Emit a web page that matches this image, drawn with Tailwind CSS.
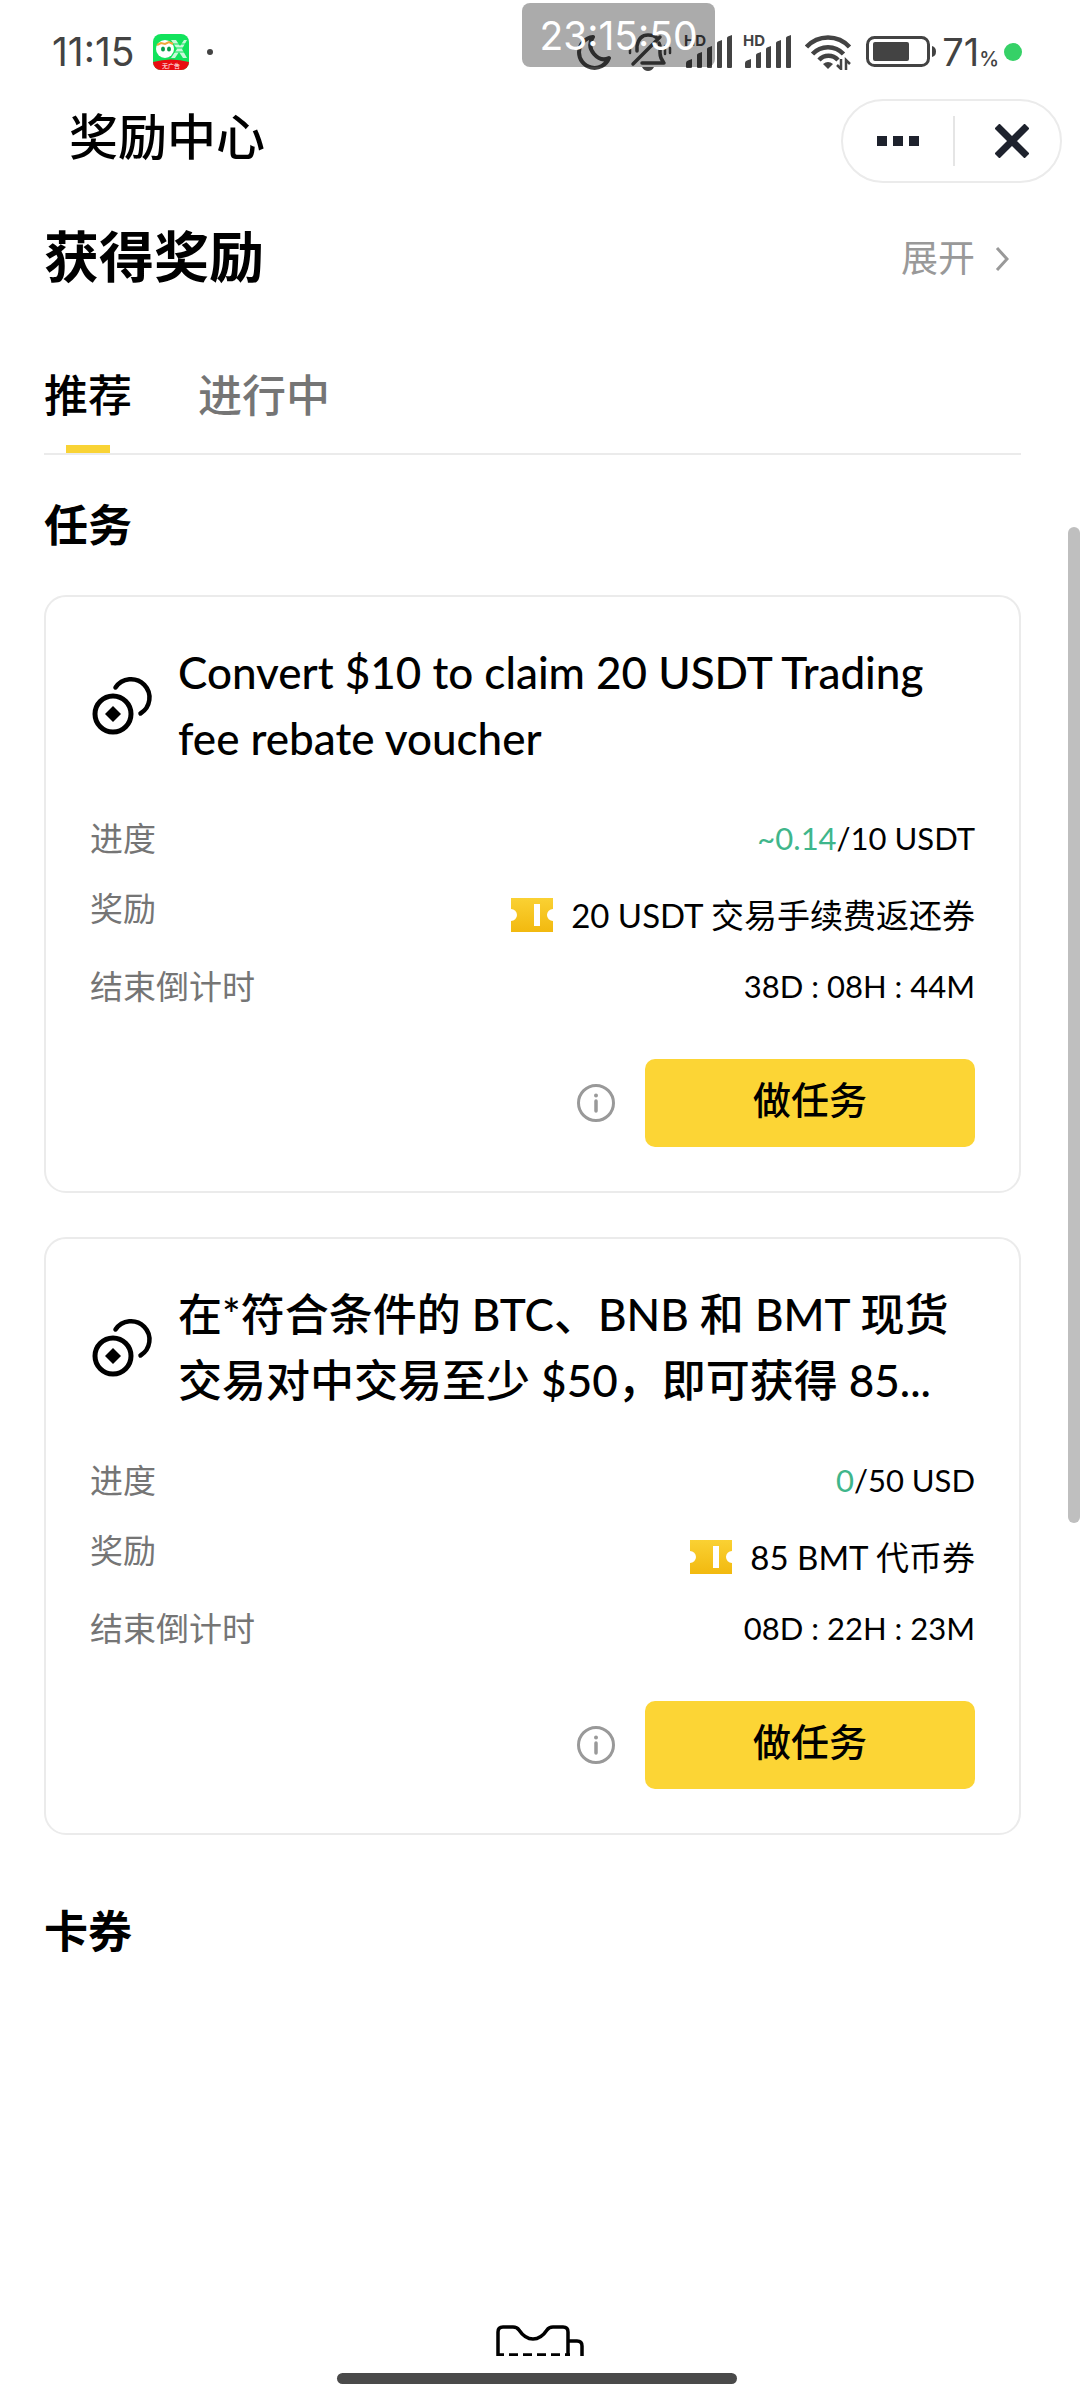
<!DOCTYPE html>
<html lang="zh-CN">
<head>
<meta charset="utf-8">
<meta name="viewport" content="width=device-width, initial-scale=1">
<title>奖励中心</title>
<script src="https://cdn.jsdelivr.net/npm/@tailwindcss/browser@4"></script>
</head>
<body class="bg-white text-black">
<svg class="absolute size-0" aria-hidden="true">
  <defs>
    <linearGradient id="gold" x1="0" y1="0" x2="0" y2="1"><stop offset="0" stop-color="#fad133"/><stop offset="1" stop-color="#f2b90f"/></linearGradient>
    <symbol id="coins" viewBox="0 0 64 60">
      <circle cx="23" cy="39" r="18" fill="none" stroke="currentColor" stroke-width="5"/>
      <path d="M23 31l8 8-8 8-8-8z" fill="currentColor"/>
      <path d="M25.500 12.500A18.500 18.500 0 1 1 50.500 38.500" fill="none" stroke="currentColor" stroke-width="4.500" stroke-linecap="round"/>
    </symbol>
    <symbol id="ticket" viewBox="0 0 42 34">
      <path d="M0 0h42v11a6 6 0 0 0 0 12v11H0V23a6 6 0 0 0 0-12z" fill="url(#gold)"/>
      <path d="M23 6h6v22h-6z" fill="#fff"/>
    </symbol>
    <symbol id="info" viewBox="0 0 38 38">
      <circle cx="19" cy="19" r="17.500" fill="none" stroke="currentColor" stroke-width="3"/>
      <path d="M19 17v10" stroke="currentColor" stroke-width="3.500" stroke-linecap="round"/>
      <circle cx="19" cy="11.500" r="2" fill="currentColor"/>
    </symbol>
    <symbol id="signal" viewBox="0 0 50 36">
      <text x="0" y="12" font-size="15" font-weight="700" font-family="Inter, sans-serif" fill="currentColor">HD</text>
      <path d="M2 33v-4q0-2 2-2.500l4-1.500v8q0 1-1 1H3q-1 0-1-1zM13 33V21q0-1 1-1.500l4-1.500v15q0 1-1 1h-3q-1 0-1-1zM23 33V15q0-1 1-1.500l4-1.500v21q0 1-1 1h-3q-1 0-1-1zM33 33V9q0-1 1-1.500L38 6v27q0 1-1 1h-3q-1 0-1-1zM43 33V4q0-1 1-1.500L48 1v32q0 1-1 1h-3q-1 0-1-1z" fill="currentColor"/>
    </symbol>
  </defs>
</svg>

<div class="relative flex min-h-screen flex-col font-['Lato','Noto_Sans_CJK_SC',sans-serif]">

  <!-- system status bar -->
  <div class="flex h-[99px] items-center justify-between pr-[58px] pl-[52px] pt-1 font-['Inter',sans-serif] text-[#434343]">
    <div class="flex items-center">
      <span class="text-[39px] leading-none">11:15</span>
      <svg class="ml-[18px] size-9" viewBox="0 0 36 36">
        <rect width="36" height="36" rx="8" fill="#12e35c"/>
        <path d="M18 6h5l4 6 4-6h3l-5 9 5 9h-4l-4-6-4 6h-4l6-9z" fill="#c9f8da"/>
        <path d="M18 10h17M18 14h17M18 18h17" stroke="#12e35c"/>
        <circle cx="12" cy="15" r="9" fill="#fff"/>
        <path d="M4 11l4-2 4 1 4-2 4 2" fill="none" stroke="#f0a73a" stroke-width="2"/>
        <ellipse cx="10" cy="15" rx="2" ry="2.500" fill="#0a9e4a"/><ellipse cx="16" cy="15" rx="2" ry="2.500" fill="#0a9e4a"/>
        <path d="M0 28q18-5 36 0a8 8 0 0 1-8 8H8a8 8 0 0 1-8-8z" fill="#e90c10"/>
        <text x="18" y="34" text-anchor="middle" font-size="6" font-family="Noto Sans CJK SC, sans-serif" fill="#fff">无广告</text>
      </svg>
      <span class="ml-[18px] size-[6px] rounded-full bg-[#434343]"></span>
    </div>
    <div class="flex items-center">
      <svg class="mr-4 h-9 w-[35px]" viewBox="0 0 35 36" fill="none" stroke="currentColor" stroke-width="4" stroke-linejoin="round"><path d="M16 3A15.500 15.500 0 1 0 32 24Q24 28 17 20Q10 12 16 3z"/></svg>
      <svg class="mr-3 h-[38px] w-11" viewBox="0 0 44 38" fill="none" stroke="currentColor" stroke-width="3.500" stroke-linecap="round" stroke-linejoin="round"><path d="M14 30h22q-4-5-4-10v-6q0-2-1-4M9 18v-5Q11 2 20 2q6 0 9 3M5 31L32 4"/><path d="M2 15v5M42 15v5M37 13v8" stroke-width="2.500"/><path d="M14 34h12q-2 4-6 4t-6-4z" fill="currentColor" stroke="none"/></svg>
      <svg class="mr-[9px] h-9 w-[50px]"><use href="#signal"/></svg>
      <svg class="mr-3 h-9 w-[50px]"><use href="#signal"/></svg>
      <svg class="mr-[14px] h-9 w-[47px]" viewBox="0 0 47 36" fill="none" stroke="currentColor" stroke-width="4.500"><path d="M1.500 13a29 29 0 0 1 43 0M7.500 20a21 21 0 0 1 31 0M14 26a13 13 0 0 1 19 0"/><path d="M18 30q5-4 10 0l-5 5z" fill="currentColor" stroke="none"/><path d="M36 25v10l-4-4M41 36V26l4 4" stroke-width="2.500"/></svg>
      <svg class="mr-[6px] h-[31px] w-[70px]" viewBox="0 0 70 31"><rect x="1.500" y="1.500" width="61" height="28" rx="7" fill="none" stroke="currentColor" stroke-width="3"/><rect x="7" y="6" width="36" height="19" rx="2" fill="currentColor"/><path d="M66 10q4 1 4 5.500T66 21z" fill="currentColor"/></svg>
      <span class="text-[38px] leading-none">71<span class="text-[20px] leading-none font-medium">%</span></span>
      <span class="ml-[5px] size-[18px] rounded-full bg-[#36d167]"></span>
    </div>
  </div>
  <!-- floating clock over the status bar -->
  <div class="absolute top-[3px] right-[365px] flex h-16 w-[193px] items-center justify-center rounded-lg bg-black/33 font-['Inter',sans-serif] text-[39px] leading-none text-white">23:15:50</div>

  <header class="flex h-[84px] items-center justify-between pr-[18px] pl-[69px]">
    <h1 class="pb-[10px] text-[49px] leading-[72px] font-medium">奖励中心</h1>
    <div class="flex h-[84px] w-[221px] items-center rounded-full border-2 border-[#ebebeb] text-[#1e222d]">
      <button class="flex w-[110px] justify-center" aria-label="更多"><svg class="h-[10px] w-[42px]" viewBox="0 0 42 10" fill="currentColor"><path d="M0 0h10v10H0zM16 0h10v10H16zM32 0h10v10H32z"/></svg></button>
      <span class="h-[50px] w-[2px] bg-[#e5e5e5]"></span>
      <button class="flex flex-1 justify-center pl-2" aria-label="关闭"><svg class="size-[34px]" viewBox="0 0 34 34" fill="none" stroke="currentColor" stroke-width="7"><path d="M2 2l30 30M32 2L2 32"/></svg></button>
    </div>
  </header>

  <main class="flex flex-1 flex-col">
    <div class="pr-[59px] pl-[44px]">
      <div class="flex h-[147px] items-center justify-between">
        <h2 class="pb-[2px] text-[55px] leading-[80px] font-bold">获得奖励</h2>
        <a href="#rewards" class="mt-[2px] mr-3 flex items-center gap-5 text-[37px] leading-[56px] text-[#999]">展开
          <svg class="mt-[2px] h-6 w-[14px]" viewBox="0 0 14 24" fill="none" stroke="currentColor" stroke-width="3"><path d="M2 1l10 11L2 23"/></svg>
        </a>
      </div>

      <nav class="flex h-[125px] gap-[66px] border-b-2 border-[#ebebeb] text-[44px] leading-[64px] font-medium">
        <button class="relative flex items-center justify-center pt-[6px]">推荐<span class="absolute bottom-0 h-2 w-11 bg-[#f9d335]"></span></button>
        <button class="flex items-center pt-[6px] text-[#757575]">进行中</button>
      </nav>

      <h3 class="flex h-[140px] items-center text-[44px] leading-[64px] font-bold">任务</h3>

      <article class="rounded-[22px] border-2 border-[#ebebeb] px-11 pt-[42px] pb-11">
        <div class="flex items-center gap-6">
          <svg class="h-[60px] w-16 shrink-0"><use href="#coins"/></svg>
          <h4 class="line-clamp-2 text-[44px] leading-[66px] font-medium">Convert $10 to claim 20 USDT Trading fee rebate voucher</h4>
        </div>
        <dl class="mt-[42px] flex flex-col gap-5 text-[33px] leading-[50px]">
          <div class="flex justify-between"><dt class="text-[#757575]">进度</dt><dd class="text-[31px]"><span class="text-[#3fb68b]">~0.14</span>/10 USDT</dd></div>
          <div class="flex h-[58px] justify-between"><dt class="text-[#757575]">奖励</dt><dd class="flex items-center gap-[18px] pt-[6px]"><svg class="h-[34px] w-[42px]"><use href="#ticket"/></svg>20 USDT 交易手续费返还券</dd></div>
          <div class="flex justify-between"><dt class="text-[#757575]">结束倒计时</dt><dd class="text-[31px]">38D : 08H : 44M</dd></div>
        </dl>
        <div class="mt-12 flex items-center justify-end gap-[30px]">
          <button class="text-[#999]" aria-label="任务说明"><svg class="size-[38px]"><use href="#info"/></svg></button>
          <button class="h-[88px] w-[330px] rounded-[10px] bg-[#fcd535] pb-2 text-[38px] leading-[56px] font-medium">做任务</button>
        </div>
      </article>

      <article class="mt-11 rounded-[22px] border-2 border-[#ebebeb] px-11 pt-[42px] pb-11">
        <div class="flex items-center gap-6">
          <svg class="h-[60px] w-16 shrink-0"><use href="#coins"/></svg>
          <h4 class="text-[44px] leading-[66px] font-medium">在*符合条件的 BTC、BNB 和 BMT 现货<br>交易对中交易至少 $50，即可获得 85...</h4>
        </div>
        <dl class="mt-[42px] flex flex-col gap-5 text-[33px] leading-[50px]">
          <div class="flex justify-between"><dt class="text-[#757575]">进度</dt><dd class="text-[31px]"><span class="text-[#3fb68b]">0</span>/50 USD</dd></div>
          <div class="flex h-[58px] justify-between"><dt class="text-[#757575]">奖励</dt><dd class="flex items-center gap-[18px] pt-[6px]"><svg class="h-[34px] w-[42px]"><use href="#ticket"/></svg>85 BMT 代币券</dd></div>
          <div class="flex justify-between"><dt class="text-[#757575]">结束倒计时</dt><dd class="text-[31px]">08D : 22H : 23M</dd></div>
        </dl>
        <div class="mt-12 flex items-center justify-end gap-[30px]">
          <button class="text-[#999]" aria-label="任务说明"><svg class="size-[38px]"><use href="#info"/></svg></button>
          <button class="h-[88px] w-[330px] rounded-[10px] bg-[#fcd535] pb-2 text-[38px] leading-[56px] font-medium">做任务</button>
        </div>
      </article>

      <h3 class="mt-[26px] flex h-[140px] items-center text-[44px] leading-[64px] font-bold">卡券</h3>
    </div>

    <!-- empty coupon illustration, cut off by the bottom of the view -->
    <svg class="mx-auto mt-auto h-[31px] w-[88px]" viewBox="0 0 88 31" fill="none" stroke="#000" stroke-width="3.500"><path d="M2 31V7q0-5 5-5h10q4 0 6 3 6 9 14 9t14-9q2-3 6-3h10q5 0 5 5v24M72 16h9q5 0 5 5v10"/><path d="M2 30h72" stroke-dasharray="9 5" stroke-dashoffset="3"/></svg>
  </main>

  <footer class="flex h-11 justify-center pt-[17px] pr-[7px]"><span class="h-[11px] w-[400px] rounded-full bg-[#4a4a4a]"></span></footer>

  <!-- scroll indicator -->
  <div class="absolute top-[527px] right-0 h-[996px] w-3 rounded-full bg-[#bfbfbf]"></div>
</div>
</body>
</html>
